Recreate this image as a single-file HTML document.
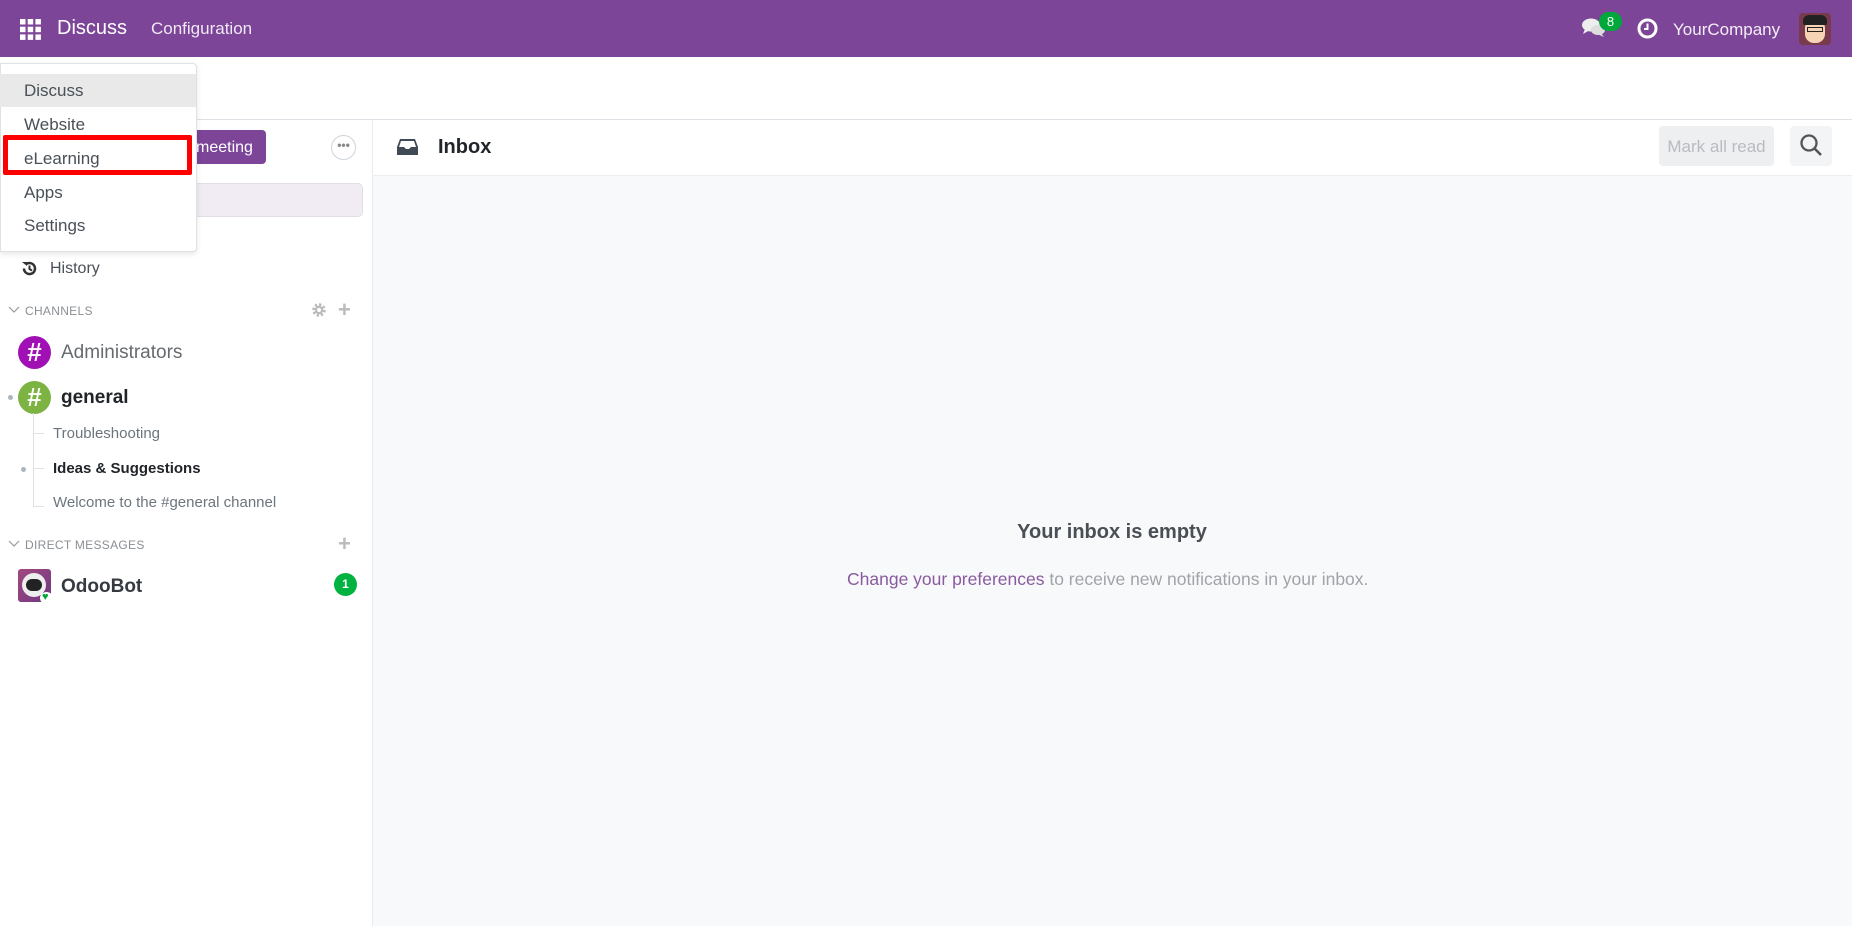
<!DOCTYPE html>
<html><head><meta charset="utf-8"><style>
*{margin:0;padding:0;box-sizing:border-box}
body{width:1852px;height:926px;overflow:hidden;font-family:"Liberation Sans","DejaVu Sans",sans-serif;background:#fff;position:relative;color:#495057}
.a{position:absolute;white-space:nowrap}
</style></head><body>
<div class="a" style="left:0;top:0;width:1852px;height:57px;background:#7c4598"></div>
<svg class="a" style="left:20px;top:19px" width="21" height="21"><g fill="#fff"><rect x="0" y="0" width="5.5" height="5.5"/><rect x="7.7" y="0" width="5.5" height="5.5"/><rect x="15.4" y="0" width="5.5" height="5.5"/><rect x="0" y="7.7" width="5.5" height="5.5"/><rect x="7.7" y="7.7" width="5.5" height="5.5"/><rect x="15.4" y="7.7" width="5.5" height="5.5"/><rect x="0" y="15.4" width="5.5" height="5.5"/><rect x="7.7" y="15.4" width="5.5" height="5.5"/><rect x="15.4" y="15.4" width="5.5" height="5.5"/></g></svg>
<div class="a" style="left:57px;top:17px;font-size:20px;color:#fff">Discuss</div>
<div class="a" style="left:151px;top:19px;font-size:17px;color:#f0e8f4">Configuration</div>
<svg class="a" style="left:1582px;top:17px" width="26" height="22"><ellipse cx="9" cy="8" rx="9" ry="6.5" fill="#eee"/><path d="M3 12 L1 17 L8 13Z" fill="#eee"/><ellipse cx="16" cy="13" rx="7" ry="5" fill="#ddd"/><path d="M19 16 L22 20 L15 17Z" fill="#ddd"/></svg>
<div class="a" style="left:1599px;top:12px;width:23px;height:19px;border-radius:10px;background:#00a83c;color:#fff;font-size:13px;text-align:center;line-height:19px">8</div>
<svg class="a" style="left:1637px;top:18px" width="21" height="21"><circle cx="10.5" cy="10.5" r="8.5" fill="none" stroke="#fff" stroke-width="3"/><path d="M10.5 5.5V11H7" fill="none" stroke="#fff" stroke-width="2"/></svg>
<div class="a" style="left:1673px;top:20px;font-size:17px;color:#f3eef6">YourCompany</div>
<div class="a" style="left:1799px;top:13px;width:32px;height:32px;border-radius:4px;background:#7a3a4e;overflow:hidden"><div style="position:absolute;left:6px;top:6px;width:20px;height:24px;border-radius:9px;background:#f6d3b4"></div><div style="position:absolute;left:4px;top:2px;width:24px;height:10px;border-radius:6px 6px 2px 2px;background:#222"></div><div style="position:absolute;left:8px;top:14px;width:16px;height:5px;border:1.5px solid #222"></div></div>
<div class="a" style="left:0;top:119px;width:1852px;height:1px;background:#dee2e6"></div>
<div class="a" style="left:372px;top:120px;width:1px;height:806px;background:#e9ecef"></div>
<div class="a" style="left:185px;top:130px;width:81px;height:34px;border-radius:4px;background:#7c4598;color:#fff;font-size:16px;padding:9px 0 0 11px">meeting</div>
<div class="a" style="left:331px;top:135px;width:25px;height:25px;border-radius:50%;border:1px solid #ced4da;color:#888;font-size:12px;text-align:center;line-height:18px;font-weight:bold">•••</div>
<div class="a" style="left:150px;top:183px;width:213px;height:34px;border-radius:5px;background:#f1ecf3;border:1px solid #e4dde8"></div>
<svg class="a" style="left:21px;top:260px" width="17" height="17"><path d="M14 8.5A5.5 5.5 0 1 1 12 4.3" fill="none" stroke="#333" stroke-width="2.5" transform="translate(17 0) scale(-1 1)"/><path d="M1 2 L6 2 L6 6Z" fill="#333"/><path d="M8.5 5.5V9L11 10.5" fill="none" stroke="#333" stroke-width="2"/></svg>
<div class="a" style="left:50px;top:260px;font-size:16px;color:#495057">History</div>
<svg class="a" style="left:8px;top:306px" width="12" height="8"><path d="M1 1L6 6L11 1" fill="none" stroke="#999" stroke-width="1.2"/></svg>
<div class="a" style="left:25px;top:304px;font-size:12px;color:#8a8f94;letter-spacing:.3px">CHANNELS</div>
<svg class="a" style="left:311px;top:302px" width="16" height="16"><circle cx="8" cy="8" r="5" fill="none" stroke="#bbb" stroke-width="3.5" stroke-dasharray="2.2 1.7"/><circle cx="8" cy="8" r="4.2" fill="#bbb"/><circle cx="8" cy="8" r="2" fill="#fff"/></svg>
<div class="a" style="left:338px;top:297px;font-size:22px;color:#bbb;font-weight:bold">+</div>
<div class="a" style="left:18px;top:336px;width:33px;height:33px;border-radius:50%;background:#a010b4;color:#fff;font-size:26px;font-weight:bold;text-align:center;line-height:33px">#</div>
<div class="a" style="left:61px;top:342px;font-size:19px;color:#666b70">Administrators</div>
<div class="a" style="left:8px;top:395px;width:5px;height:5px;border-radius:50%;background:#adb5bd"></div>
<div class="a" style="left:18px;top:381px;width:33px;height:33px;border-radius:50%;background:#7cb342;color:#fff;font-size:26px;font-weight:bold;text-align:center;line-height:33px">#</div>
<div class="a" style="left:61px;top:387px;font-size:19px;color:#212529;font-weight:bold">general</div>
<div class="a" style="left:33px;top:413px;width:1px;height:94px;background:#dee2e6"></div>
<div class="a" style="left:34px;top:433px;width:10px;height:1px;background:#dee2e6"></div>
<div class="a" style="left:34px;top:468px;width:10px;height:1px;background:#dee2e6"></div>
<div class="a" style="left:34px;top:506px;width:10px;height:1px;background:#dee2e6"></div>
<div class="a" style="left:53px;top:425px;font-size:15px;color:#6c757d">Troubleshooting</div>
<div class="a" style="left:21px;top:467px;width:5px;height:5px;border-radius:50%;background:#adb5bd"></div>
<div class="a" style="left:53px;top:460px;font-size:15px;color:#212529;font-weight:bold">Ideas &amp; Suggestions</div>
<div class="a" style="left:53px;top:494px;font-size:15px;color:#6c757d">Welcome to the #general channel</div>
<svg class="a" style="left:8px;top:540px" width="12" height="8"><path d="M1 1L6 6L11 1" fill="none" stroke="#999" stroke-width="1.2"/></svg>
<div class="a" style="left:25px;top:538px;font-size:12px;color:#8a8f94;letter-spacing:.3px">DIRECT MESSAGES</div>
<div class="a" style="left:338px;top:531px;font-size:22px;color:#bbb;font-weight:bold">+</div>
<div class="a" style="left:18px;top:569px;width:33px;height:33px;border-radius:3px;background:linear-gradient(135deg,#a3487f,#6e3a82)"><div style="position:absolute;left:4px;top:4px;width:24px;height:24px;border-radius:50%;background:#eee"></div><div style="position:absolute;left:8px;top:10px;width:16px;height:12px;border-radius:6px;background:#222"></div></div>
<div class="a" style="left:40px;top:592px;width:13px;height:12px;border-radius:50%;background:#fff"></div>
<div class="a" style="left:42px;top:591px;font-size:11px;color:#00a83c">♥</div>
<div class="a" style="left:61px;top:576px;font-size:19px;color:#343a40;font-weight:bold">OdooBot</div>
<div class="a" style="left:334px;top:573px;width:23px;height:23px;border-radius:50%;background:#00b341;color:#fff;font-size:12px;text-align:center;line-height:23px;font-weight:bold">1</div>
<div class="a" style="left:373px;top:175px;width:1479px;height:751px;background:#f8f9fa;border-top:1px solid #eee"></div>
<svg class="a" style="left:397px;top:138px" width="21" height="17"><path d="M3 1H18L21 9V17H0V9Z" fill="#3f4a55"/><path d="M4 3H17L19 9H14L12 11H9L7 9H2Z" fill="#fff"/></svg>
<div class="a" style="left:438px;top:136px;font-size:20px;color:#212529;font-weight:bold">Inbox</div>
<div class="a" style="left:1659px;top:126px;width:115px;height:40px;border-radius:4px;background:#eeeff1;color:#b8bcc0;font-size:17px;text-align:center;line-height:42px">Mark all read</div>
<div class="a" style="left:1790px;top:126px;width:42px;height:40px;border-radius:4px;background:#f3f4f5"></div>
<svg class="a" style="left:1799px;top:133px" width="25" height="25"><circle cx="10" cy="10" r="7.5" fill="none" stroke="#555" stroke-width="2.3"/><path d="M15.5 15.5L22 22" stroke="#555" stroke-width="2.6"/></svg>
<div class="a" style="left:992px;top:521px;width:240px;font-size:20px;font-weight:bold;color:#4a4f55;text-align:center">Your inbox is empty</div>
<div class="a" style="left:847px;top:569px;font-size:17.5px;color:#a0a4a8"><span style="color:#8a5aa0">Change your preferences</span> to receive new notifications in your inbox.</div>
<div class="a" style="left:0;top:63px;width:197px;height:189px;background:#fff;border:1px solid #dee2e6;border-radius:0 4px 4px 0;box-shadow:0 2px 6px rgba(0,0,0,.1)"></div>
<div class="a" style="left:0;top:74px;width:196px;height:33px;background:#e9e9e9"></div>
<div class="a" style="left:24px;top:81px;font-size:17px;color:#495057">Discuss</div>
<div class="a" style="left:24px;top:115px;font-size:17px;color:#495057">Website</div>
<div class="a" style="left:24px;top:149px;font-size:17px;color:#495057">eLearning</div>
<div class="a" style="left:24px;top:183px;font-size:17px;color:#495057">Apps</div>
<div class="a" style="left:24px;top:216px;font-size:17px;color:#495057">Settings</div>
<div class="a" style="left:3px;top:135px;width:189px;height:40px;border:5px solid #ff0000;border-radius:2px"></div>
</body></html>
